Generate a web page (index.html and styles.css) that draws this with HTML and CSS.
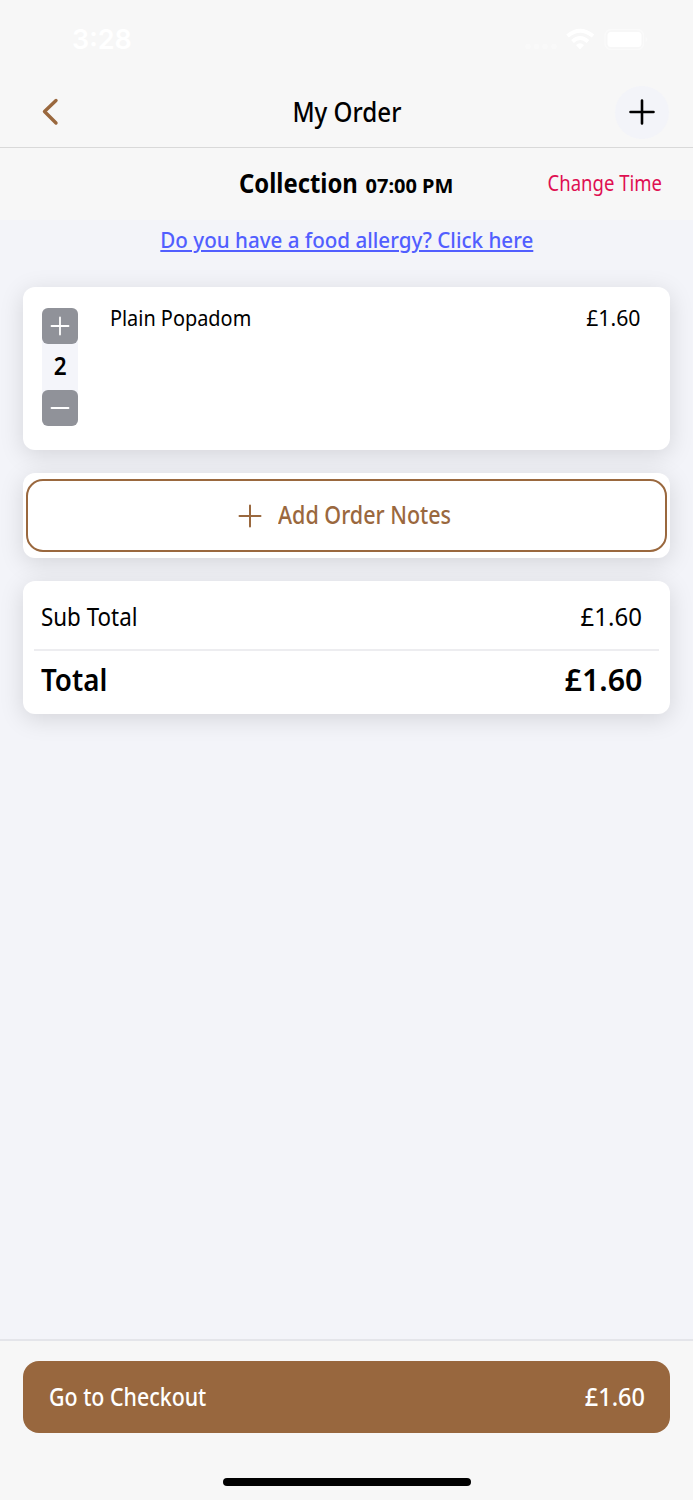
FILE: index.html
```
<!DOCTYPE html>
<html lang="en">
<head>
<meta charset="utf-8">
<title>My Order</title>
<link rel="stylesheet" href="styles.css">
</head>
<body>
<div class="screen">
  <header class="top">
    <div class="status">
      <span class="clock">3:28</span>
      <svg class="status-icons" width="126" height="24" viewBox="0 0 126 24">
        <g fill-opacity=".3"><circle cx="7" cy="19.500" r="2.800"/><circle cx="15.500" cy="19.500" r="2.800"/><circle cx="24" cy="19.500" r="2.800"/><circle cx="33" cy="19.500" r="2.800"/></g>
        <g fill="none" stroke="#fff" stroke-width="3.8"><path d="M46.500 9 Q59 -1.500 72 9"/><path d="M51.500 14.500 Q59 7.500 67 14.500"/></g>
        <path d="M55 18Q59 14.500 63 18L59 22.500Z"/>
        <rect x="84" y="2.500" width="38.500" height="20" rx="6" fill="none" stroke="#fff" stroke-opacity=".4" stroke-width="1.500"/>
        <rect x="86.500" y="5" width="34" height="15" rx="3.500"/>
        <path d="M124.500 9.500q4 3 0 6Z" fill-opacity=".4"/>
      </svg>
    </div>
    <div class="nav">
      <button class="back" aria-label="Back"><svg width="18" height="28" viewBox="0 0 18 28"><path d="M15 2.500 3.500 13.500 15 25"/></svg></button>
      <h1 class="title t">My Order</h1>
      <button class="add" aria-label="Add"><svg width="26" height="26" viewBox="0 0 26 26"><path d="M13 1.500v23M1.500 13h23"/></svg></button>
    </div>
  </header>
  <section class="slot">
    <span></span>
    <p class="when"><b class="t mode">Collection</b><b class="t time">07:00 PM</b></p>
    <a class="change t">Change Time</a>
  </section>
  <main class="content">
    <a class="allergy t">Do you have a food allergy? Click here</a>
    <section class="card item">
      <div class="stepper">
        <button aria-label="More"><svg width="20" height="20" viewBox="0 0 20 20"><path d="M10 1.500v17M1.500 10h17"/></svg></button>
        <span class="qty">2</span>
        <button aria-label="Less"><svg width="20" height="20" viewBox="0 0 20 20"><path d="M1.500 10h17"/></svg></button>
      </div>
      <span class="name t">Plain Popadom</span>
      <span class="price t">£1.60</span>
    </section>
    <section class="card notes">
      <button class="notes-btn"><svg width="24" height="24" viewBox="0 0 24 24"><path d="M12 1.500v21M1.500 12h21"/></svg><span class="t notes-label">Add Order Notes</span></button>
    </section>
    <section class="card sums">
      <div class="row sub"><span class="t sub-label">Sub Total</span><span class="t sub-price">£1.60</span></div>
      <div class="row total"><span class="t total-label">Total</span><span class="t total-price">£1.60</span></div>
    </section>
  </main>
  <footer class="bottom">
    <button class="checkout"><span class="t go">Go to Checkout</span><span class="t go-price">£1.60</span></button>
    <div class="home"></div>
  </footer>
</div>
</body>
</html>
```
FILE: styles.css
```
* { box-sizing: border-box; margin: 0; padding: 0; }
body { font-family: "Noto Sans", sans-serif; color: #000; background: #f3f4f9; }
button { border: 0; background: none; font: inherit; color: inherit; }
svg { display: block; fill: none; }
.screen { width: 693px; height: 1500px; display: flex; flex-direction: column; }
.t { display: inline-block; white-space: nowrap; transform: scaleX(.895); transform-origin: left center; }

.top { height: 148px; background: #f7f7f7; border-bottom: 1px solid #d9d9d9; }
.status { height: 78px; padding: 0 46px 0 72px; display: flex; align-items: center; justify-content: space-between; color: #fff; }
.status-icons { overflow: visible; fill: #fff; }
.clock { font: 600 27px/32px Inter, sans-serif; padding-top: 2px; }
.nav { height: 68px; padding: 0 24px; display: grid; grid-template-columns: 1fr auto 1fr; align-items: center; }
.back { justify-self: start; padding-left: 17px; }
.back path { stroke: #9a683e; stroke-width: 3.4; stroke-linecap: round; stroke-linejoin: round; }
.title { font-size: 27px; font-weight: 500; line-height: 36px; transform-origin: center; }
.add { justify-self: end; width: 54px; height: 53px; border-radius: 50%; background: #f3f4f9; display: grid; place-items: center; }
.add path { stroke: #000; stroke-width: 2.6; stroke-linecap: round; }

.slot { height: 72px; padding: 0 31px; background: #f7f7f7; display: grid; grid-template-columns: 1fr auto 1fr; align-items: center; }
.when { width: 216px; display: flex; justify-content: space-between; align-items: baseline; line-height: 36px; }
.mode { font-size: 26.500px; width: 120px; transform: scaleX(.9); }
.time { font-size: 20px; width: 89px; transform: none; }
.change { justify-self: end; padding-bottom: 3px; font-size: 21.500px; color: #df0f52; transform: scaleX(.86); transform-origin: right center; }

.content { flex: 1; padding: 0 23px; display: flex; flex-direction: column; gap: 23px; }
.allergy { height: 44px; line-height: 40px; align-self: center; font-size: 22.500px; font-weight: 500; color: #515eff; text-decoration: underline; text-decoration-thickness: 1.500px; text-underline-offset: 2px; transform: scaleX(.915); transform-origin: center; }
.card { background: #fff; border-radius: 12px; box-shadow: 0 5px 24px rgba(0, 0, 0, .13); }
.item { height: 163px; padding: 21px 29px 0 19px; display: grid; grid-template-columns: 36px 1fr auto; align-items: start; }
.stepper { height: 118px; width: 36px; display: flex; flex-direction: column; justify-content: space-between; align-items: center; background: #f4f5fa; border-radius: 7px; }
.stepper button { width: 36px; height: 36px; border-radius: 6px; background: #909299; display: grid; place-items: center; }
.stepper path { stroke: #fff; stroke-width: 1.8; stroke-linecap: round; }
.qty { font-size: 25px; line-height: 32px; padding-bottom: 4px; font-weight: 600; transform: scaleX(.9); }
.name { margin-left: 31px; padding-left: 1px; font-size: 22.500px; line-height: 20px; justify-self: start; transform: scaleX(.885); }
.price { font-size: 22.500px; line-height: 20px; transform: scaleX(.945); transform-origin: right center; }
.notes { height: 85px; padding: 6px 3px; }
.notes-btn { width: 100%; height: 73px; border: 2px solid #9a683e; border-radius: 17px; color: #9a683e; display: flex; align-items: center; justify-content: flex-start; gap: 16px; padding-left: 210px; }
.notes-btn path { stroke: currentColor; stroke-width: 2; stroke-linecap: round; }
.notes-label { font-size: 25px; font-weight: 500; line-height: 34px; padding-bottom: 4px; transform: scaleX(.86); }
.sums { height: 133px; padding: 0 11px; }
.row { display: flex; justify-content: space-between; align-items: center; padding: 0 17px 0 7px; }
.sub { height: 70px; padding-top: 2px; border-bottom: 2px solid #ededf0; font-size: 25px; }
.sub-label { transform: scaleX(.895); }
.sub-price { transform: scaleX(.96); transform-origin: right center; }
.total { height: 56px; font-size: 31px; font-weight: 600; }
.total-price { transform: scaleX(.98); transform-origin: right center; }

.bottom { height: 161px; padding: 20px 23px 0; background: #f7f7f7; border-top: 2px solid #e4e5ea; display: flex; flex-direction: column; align-items: center; }
.checkout { width: 100%; height: 72px; padding: 0 25px 2px 26px; border-radius: 16px; background: #98673e; color: #fff; display: flex; align-items: center; justify-content: space-between; font-size: 25px; font-weight: 500; }
.go { transform: scaleX(.855); }
.go-price { transform: scaleX(.94); transform-origin: right center; }
.home { width: 248px; height: 8px; margin-top: 45px; border-radius: 4px; background: #000; }
```
